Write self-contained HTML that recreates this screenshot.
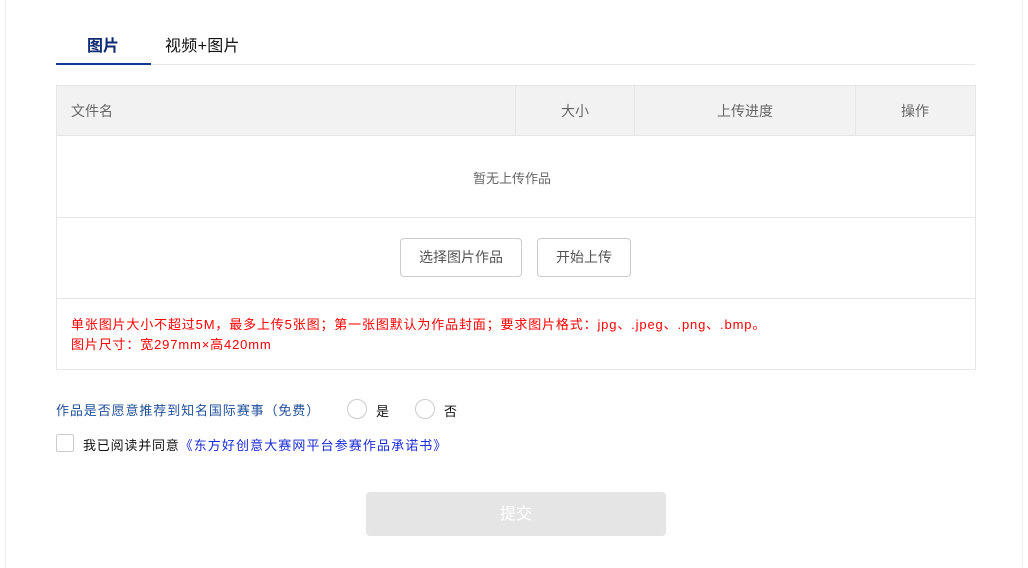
<!DOCTYPE html><html><head><meta charset="utf-8"><style>
*{margin:0;padding:0;box-sizing:border-box}
body{width:1028px;height:568px;background:#fff;font-family:"Liberation Sans","Noto Sans CJK SC",sans-serif;position:relative;overflow:hidden;font-size:14px}
.a{position:absolute}
.bl{border-left:1px solid #e6e6e6}
</style></head><body>
<div class="a" style="left:5px;top:0;width:1px;height:568px;background:#eee"></div>
<div class="a" style="left:1022px;top:0;width:1px;height:568px;background:#eee"></div>
<div class="a" style="left:56px;top:64px;width:919px;height:1px;background:#e6e6e6"></div>
<div class="a" style="left:56px;top:63px;width:95px;height:2px;background:#0e3a8f"></div>
<div class="a" style="left:87px;top:32px;font-size:16px;color:#0e2a70;font-weight:bold">图片</div>
<div class="a" style="left:165px;top:32px;font-size:16px;color:#111;letter-spacing:0.3px">视频+图片</div>
<div class="a" style="left:56px;top:85px;width:920px;height:285px;border:1px solid #e6e6e6"></div>
<div class="a" style="left:57px;top:86px;width:918px;height:50px;background:#f2f2f2;border-bottom:1px solid #e6e6e6"></div>
<div class="a bl" style="left:515px;top:86px;height:50px"></div>
<div class="a bl" style="left:634px;top:86px;height:50px"></div>
<div class="a bl" style="left:855px;top:86px;height:50px"></div>
<div class="a" style="left:71px;top:101px;color:#666">文件名</div>
<div class="a" style="left:561px;top:101px;color:#666">大小</div>
<div class="a" style="left:717px;top:101px;color:#666">上传进度</div>
<div class="a" style="left:901px;top:101px;color:#666">操作</div>
<div class="a" style="left:473px;top:168px;color:#666;font-size:13px">暂无上传作品</div>
<div class="a" style="left:57px;top:217px;width:918px;height:1px;background:#e6e6e6"></div>
<div class="a" style="left:57px;top:298px;width:918px;height:1px;background:#e6e6e6"></div>
<div class="a" style="left:400px;top:238px;width:122px;height:39px;border:1px solid #ccc;border-radius:4px;color:#555;text-align:center;line-height:37px">选择图片作品</div>
<div class="a" style="left:537px;top:238px;width:94px;height:39px;border:1px solid #ccc;border-radius:4px;color:#555;text-align:center;line-height:37px">开始上传</div>
<div class="a" style="left:71px;top:315px;color:#f00;font-size:13px;line-height:20px;letter-spacing:0.85px">单张图片大小不超过5M，最多上传5张图；第一张图默认为作品封面；要求图片格式：jpg、.jpeg、.png、.bmp。<br>图片尺寸：宽297mm×高420mm</div>
<div class="a" style="left:56px;top:400px;color:#1f4f9a;font-size:13px;letter-spacing:0.9px">作品是否愿意推荐到知名国际赛事（免费）</div>
<div class="a" style="left:347px;top:399px;width:20px;height:20px;border:1px solid #ccc;border-radius:50%"></div>
<div class="a" style="left:376px;top:401px;font-size:13px;color:#111">是</div>
<div class="a" style="left:415px;top:399px;width:20px;height:20px;border:1px solid #ccc;border-radius:50%"></div>
<div class="a" style="left:444px;top:401px;font-size:13px;color:#111">否</div>
<div class="a" style="left:56px;top:434px;width:18px;height:18px;border:1px solid #ccc;border-radius:2px"></div>
<div class="a" style="left:83px;top:435px;font-size:13px;color:#111;letter-spacing:0.8px">我已阅读并同意<span style="color:#1a2bd8;letter-spacing:1.1px">《东方好创意大赛网平台参赛作品承诺书》</span></div>
<div class="a" style="left:366px;top:492px;width:300px;height:44px;background:#e5e5e5;border-radius:4px;color:#fff;text-align:center;line-height:46px;font-size:16px">提交</div>
</body></html>
